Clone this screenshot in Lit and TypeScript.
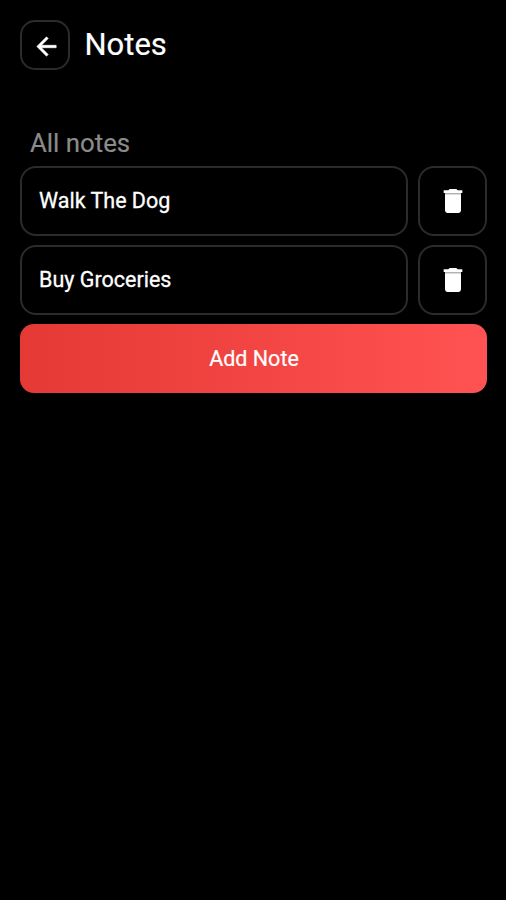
import { LitElement, html, css } from "lit";
import { customElement, state } from "lit/decorators.js";

@customElement("app-root")
export class AppRoot extends LitElement {
  static styles = css`
    :host {
      display: block;
      box-sizing: border-box;
      height: 100vh;
      padding: 20px 19px 0 20px;
      background: #000;
      color: #fff;
      font-family: Roboto, sans-serif;
      overflow: hidden;
    }
    * {
      box-sizing: border-box;
    }
    header {
      display: flex;
      align-items: center;
      height: 50px;
      gap: 14.5px;
    }
    button {
      display: grid;
      place-items: center;
      padding: 0;
      background: #000;
      border: 2px solid #2b2b2b;
      color: #fff;
      font: inherit;
    }
    .back {
      width: 50px;
      height: 50px;
      border-radius: 15px;
    }
    .back svg {
      margin: 2px 0 0 2px;
      stroke: currentColor;
      stroke-width: 0.5;
    }
    svg {
      display: block;
      fill: currentColor;
    }
    h1 {
      margin: 0;
      font-size: 31px;
      font-weight: 400;
      line-height: 48px;
      -webkit-text-stroke: 0.2px currentColor;
    }
    h2 {
      margin: 58px 0 8px 10px;
      font-size: 25.8px;
      font-weight: 400;
      line-height: 30px;
      color: #8b8b8b;
      -webkit-text-stroke: 0.2px currentColor;
    }
    .list {
      display: grid;
      gap: 9px;
    }
    .row {
      display: grid;
      grid-template-columns: 1fr 69px;
      gap: 10px;
      height: 70px;
    }
    .note {
      display: flex;
      align-items: center;
      padding: 0 0 2px 17px;
      border: 2px solid #2b2b2b;
      border-radius: 16px;
      font-size: 21.5px;
      -webkit-text-stroke: 0.3px currentColor;
    }
    .remove {
      border-radius: 16px;
    }
    .add {
      height: 69px;
      padding: 0 0 1px 1px;
      border: 0;
      border-radius: 14px;
      background: linear-gradient(90deg, #e53935, #ff5252);
      font-size: 21.5px;
      -webkit-text-stroke: 0.2px currentColor;
    }
  `;

  @state() private notes = ["Walk The Dog", "Buy Groceries"];

  render() {
    return html`
      <header>
        <button class="back" aria-label="Back">
          <svg width="29" height="29" viewBox="0 0 24 24">
            <path d="M20 11H7.83l5.59-5.59L12 4l-8 8 8 8 1.41-1.41L7.83 13H20v-2z" />
          </svg>
        </button>
        <h1>Notes</h1>
      </header>
      <h2>All notes</h2>
      <div class="list">
        ${this.notes.map(
          (note) => html`
            <div class="row">
              <div class="note">${note}</div>
              <button class="remove" aria-label="Delete">
                <svg width="32" height="32" viewBox="0 0 24 24">
                  <path d="M6 19c0 1.1.9 2 2 2h8c1.1 0 2-.9 2-2V7H6v12zM19 4h-3.5l-1-1h-5l-1 1H5v2h14V4z" />
                  <path d="M6 5.8h12v1.4H6z" opacity="0.7" />
                </svg>
              </button>
            </div>
          `
        )}
        <button class="add">Add Note</button>
      </div>
    `;
  }
}
